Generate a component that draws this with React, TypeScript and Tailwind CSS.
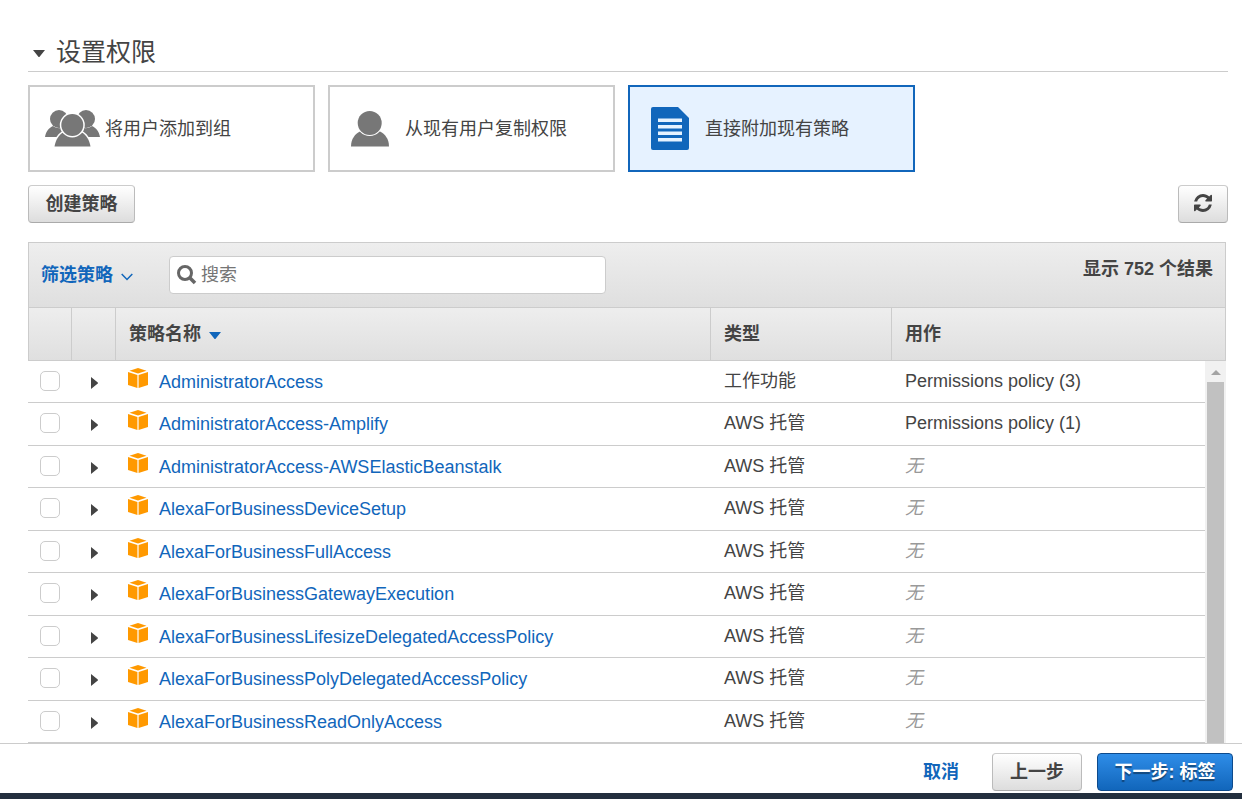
import React from "react";

type Policy = { name: string; type: string; usedAs?: string };

const policies: Policy[] = [
  { name: "AdministratorAccess", type: "工作功能", usedAs: "Permissions policy (3)" },
  { name: "AdministratorAccess-Amplify", type: "AWS 托管", usedAs: "Permissions policy (1)" },
  { name: "AdministratorAccess-AWSElasticBeanstalk", type: "AWS 托管" },
  { name: "AlexaForBusinessDeviceSetup", type: "AWS 托管" },
  { name: "AlexaForBusinessFullAccess", type: "AWS 托管" },
  { name: "AlexaForBusinessGatewayExecution", type: "AWS 托管" },
  { name: "AlexaForBusinessLifesizeDelegatedAccessPolicy", type: "AWS 托管" },
  { name: "AlexaForBusinessPolyDelegatedAccessPolicy", type: "AWS 托管" },
  { name: "AlexaForBusinessReadOnlyAccess", type: "AWS 托管" },
];

const greyButton =
  "h-[38px] rounded border border-[#bbb] border-t-[#ccc] border-b-[#aaa] bg-linear-to-b from-white to-[#ddd] font-bold";

function GroupIcon() {
  return (
    <svg width="55" height="38" viewBox="0 0 55 38" fill="#777">
      <circle cx="14" cy="9" r="9" />
      <circle cx="41" cy="9" r="9" />
      <path d="M0 27C1 21 4 18 8 16c4 3 9 3 12 0l6 11z" />
      <path d="M55 27c-1-6-4-9-8-11-4 3-9 3-12 0l-6 11z" />
      <g stroke="#fff" strokeWidth="3" paintOrder="stroke">
        <path d="M9.500 36.500C10.500 30 14 25 18 22.500h19C41 25 44.500 30 45.500 36.500z" />
        <circle cx="27.300" cy="15" r="11" />
      </g>
    </svg>
  );
}

function UserIcon() {
  return (
    <svg width="43" height="36" viewBox="0 0 43 36" fill="#777">
      <path d="M0 35.500C0 28 4 23 9 20.500h20C34 23 38 28 38 35.500z" />
      <circle cx="18.700" cy="12" r="12" stroke="#fff" strokeWidth="2" paintOrder="stroke" />
    </svg>
  );
}

function DocumentIcon() {
  return (
    <svg width="43" height="43" viewBox="0 0 43 43">
      <path d="M2 0h25l11 11v30a2 2 0 0 1-2 2H2a2 2 0 0 1-2-2V2a2 2 0 0 1 2-2z" fill="#16b" />
      <path d="M7 11.500h24v3.500H7zM7 18h24v3.500H7zM7 24.500h24V28H7zM7 31h24v3.500H7z" fill="#e6f2ff" />
    </svg>
  );
}

function CubeIcon() {
  return (
    <svg className="shrink-0" width="20" height="20" viewBox="0 0 20 20" fill="#f90">
      <path d="M10 0l8.500 2.700L10 5.500 1.500 2.700z" />
      <path d="M0 4l9.400 3.100V20L0 17zM20 4l-9.400 3.100V20L20 17z" />
    </svg>
  );
}

function RefreshIcon() {
  return (
    <svg className="mb-[2px]" width="18" height="18" viewBox="0 0 1536 1536" fill="#444">
      <path d="M1511 928q0 5-1 7-64 268-268 434.500T764 1536q-146 0-282.500-55T238 1324l-129 129q-19 19-45 19t-45-19-19-45V960q0-26 19-45t45-19h448q26 0 45 19t19 45-19 45l-137 137q71 66 161 102t187 36q134 0 250-65t186-179q11-17 53-117 8-23 30-23h192q13 0 22.500 9.500t9.500 22.500zm25-800v448q0 26-19 45t-45 19h-448q-26 0-45-19t-19-45 19-45l138-138Q969 256 768 256q-134 0-250 65T332 500q-11 17-53 117-8 23-30 23H50q-13 0-22.500-9.500T18 608v-7q65-268 270-434.500T768 0q146 0 284 55.500T1297 212l130-129q19-19 45-19t45 19 19 45z" />
    </svg>
  );
}

function SearchIcon() {
  return (
    <svg className="shrink-0" width="20" height="20" viewBox="0 0 20 20" fill="none" stroke="#666">
      <circle cx="8" cy="8" r="6.500" strokeWidth="3" />
      <path d="M12.500 12.500L18 18" strokeWidth="3.500" />
    </svg>
  );
}

function Option({ icon, label, selected }: { icon: React.ReactNode; label: string; selected?: boolean }) {
  return (
    <button
      aria-pressed={!!selected}
      className={
        "flex h-[87px] w-[287px] items-center gap-[5px] border-2 pl-[15px] text-left " +
        (selected ? "border-[#16b] bg-[#e6f2ff]" : "border-[#ccc] bg-white")
      }
    >
      <span className="flex w-[55px] justify-center">{icon}</span>
      <span>{label}</span>
    </button>
  );
}

export default function App() {
  return (
    <div className="flex h-screen flex-col bg-white font-['Liberation_Sans','Noto_Sans_CJK_SC',sans-serif] text-[18px] leading-6 text-[#444]">
      <main className="min-h-0 flex-1 overflow-hidden pt-8 pr-[14px] pl-7">
        <h1 className="flex h-10 items-center gap-[11px] border-b border-[#ccc] pl-[5px] text-[25px] leading-9">
          <svg className="mt-1" width="12" height="7" viewBox="0 0 12 7" fill="#444">
            <path d="M0 0h12L6.800 6.500q-.8 1-1.600 0z" />
          </svg>
          设置权限
        </h1>

        <div className="mt-[13px] flex gap-[13px]">
          <Option icon={<GroupIcon />} label="将用户添加到组" />
          <Option icon={<UserIcon />} label="从现有用户复制权限" />
          <Option icon={<DocumentIcon />} label="直接附加现有策略" selected />
        </div>

        <div className="mt-[13px] flex justify-between">
          <button className={greyButton + " w-[107px]"}>创建策略</button>
          <button aria-label="刷新" className={greyButton + " flex w-[50px] items-center justify-center"}>
            <RefreshIcon />
          </button>
        </div>

        <section className="relative mt-[19px] mr-[2px]">
          <div className="flex h-[65px] items-center border border-b-0 border-[#ccc] bg-linear-to-b from-[#eee] to-[#dfdfdf] px-3">
            <button className="flex items-center gap-2 font-bold text-[#16b]">
              筛选策略
              <svg className="mt-1" width="12" height="8" viewBox="0 0 12 8" fill="none" stroke="#16b" strokeWidth="1.500">
                <path d="M.7 1L6 6.500 11.300 1" />
              </svg>
            </button>
            <label className="ml-9 flex h-[38px] w-[437px] items-center gap-1 rounded border border-[#ccc] bg-white pl-[7px]">
              <SearchIcon />
              <input
                aria-label="搜索"
                placeholder="搜索"
                className="min-w-0 flex-1 outline-none placeholder:text-[#757575]"
              />
            </label>
            <p className="mb-3 ml-auto font-bold">显示 752 个结果</p>
          </div>

          <table className="w-full table-fixed border-separate border-spacing-0 text-left">
            <colgroup>
              <col className="w-11" />
              <col className="w-11" />
              <col />
              <col className="w-[181px]" />
              <col className="w-[334px]" />
            </colgroup>
            <thead>
              <tr className="h-[54px] bg-linear-to-b from-[#eee] to-[#dfdfdf] [&>th]:border-y [&>th]:border-r [&>th]:border-[#ccc] [&>th]:p-0">
                <th aria-label="选择" className="border-l" />
                <th aria-label="展开" />
                <th>
                  <button className="flex items-center gap-2 pl-[13px] font-bold">
                    策略名称
                    <svg className="mt-[2px]" width="12" height="7" viewBox="0 0 12 7" fill="#16b">
                      <path d="M0 0h12L6.800 6.500q-.8 1-1.600 0z" />
                    </svg>
                  </button>
                </th>
                <th><span className="pl-[13px]">类型</span></th>
                <th><span className="pl-[13px]">用作</span></th>
              </tr>
            </thead>
            <tbody>
              {policies.map((p) => (
                <tr
                  key={p.name}
                  className="odd:h-[42px] even:h-[43px] [&>td]:border-b [&>td]:border-[#ccc] [&>td]:p-0 [&>td]:pb-[2px]"
                >
                  <td>
                    <input
                      type="checkbox"
                      aria-label={p.name}
                      className="ml-3 block size-5 appearance-none rounded-[5px] border border-[#ccc] bg-white checked:bg-[#16b]"
                    />
                  </td>
                  <td>
                    <button aria-label="展开" className="block pt-1 pl-[19px]">
                      <svg width="7" height="12" viewBox="0 0 7 12" fill="#444">
                        <path d="M0 0v12l6.500-5.200q1-.8 0-1.600z" />
                      </svg>
                    </button>
                  </td>
                  <td>
                    <div className="flex items-start gap-[11px] pl-3">
                      <CubeIcon />
                      <a href="#" className="pt-[2px] leading-6 text-[#16b]">{p.name}</a>
                    </div>
                  </td>
                  <td><span className="pl-[13px]">{p.type}</span></td>
                  <td>
                    <span className="pl-[13px]">{p.usedAs ?? <em className="text-[#999]">无</em>}</span>
                  </td>
                </tr>
              ))}
            </tbody>
          </table>

          <div aria-hidden="true" className="absolute top-[119px] right-0 bottom-0 flex w-[21px] flex-col items-center bg-[#f1f1f1]">
            <svg className="my-[7px] h-[7px] shrink-0" width="10" height="7" viewBox="0 0 10 7" fill="#a3a3a3">
              <path d="M0 7l5-5 5 5z" />
            </svg>
            <div className="w-[17px] flex-1 bg-[#c1c1c1]" />
          </div>
        </section>
      </main>

      <footer className="flex h-14 shrink-0 items-center justify-end gap-[15px] border-t border-b-[6px] border-t-[#ccc] border-b-[#232f3e] pt-[7px] pr-[9px]">
        <button className="mr-[18px] font-bold text-[#16b]">取消</button>
        <button className={greyButton + " w-[90px]"}>上一步</button>
        <button className="h-[38px] w-[136px] rounded border border-[#0d4a8c] bg-linear-to-b from-[#2e8de8] to-[#16b] font-bold text-white text-shadow-[0_2px_1px_rgb(0_0_0/0.4)]">
          下一步: 标签
        </button>
      </footer>
    </div>
  );
}
